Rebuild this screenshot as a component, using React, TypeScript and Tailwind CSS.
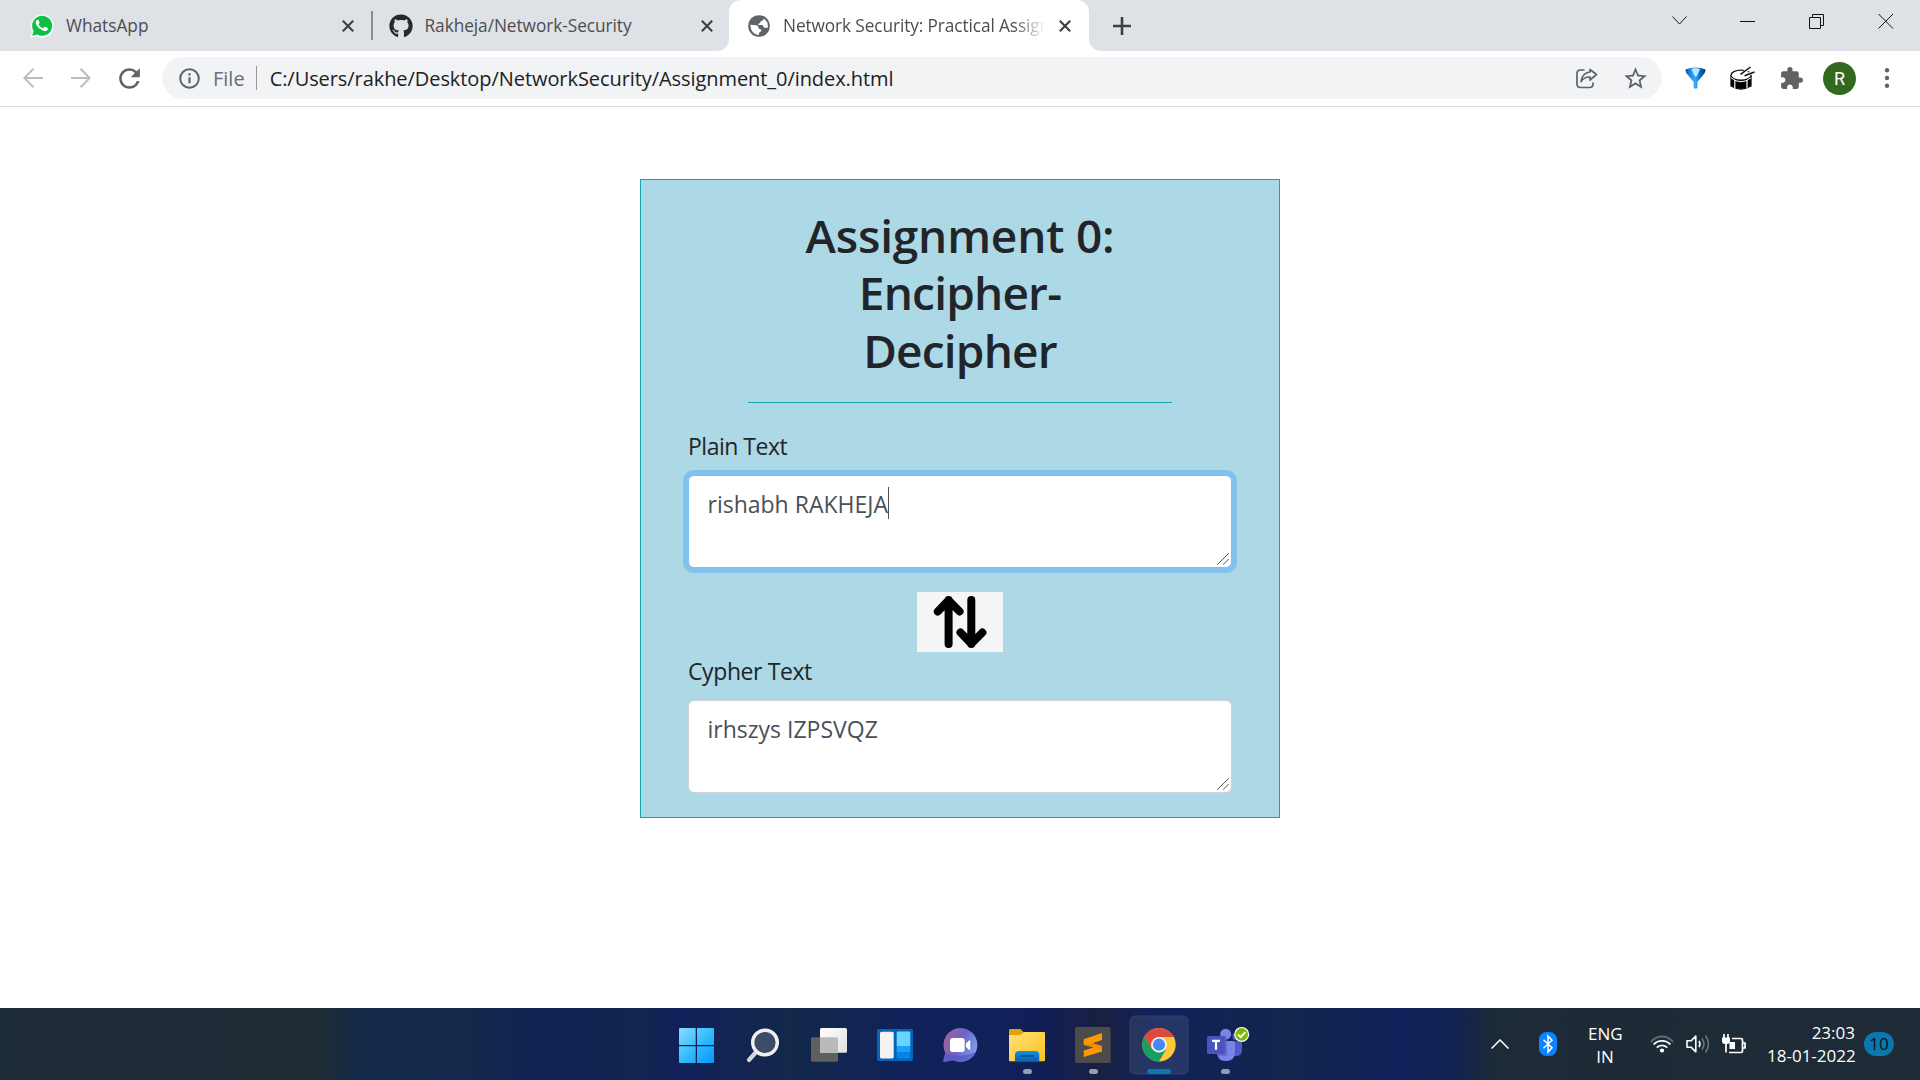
import type { ReactNode } from "react";
import { FaGithub } from "react-icons/fa";
import { MdExtension, MdRefresh, MdStarBorder } from "react-icons/md";

function CloseX() {
  return (
    <svg className="h-3 w-3 shrink-0" viewBox="0 0 12 12" fill="none" stroke="#3c4043" strokeWidth="2.1">
      <path d="M.8.8 11.2 11.2M11.2.8.8 11.2" />
    </svg>
  );
}

function WhatsAppIcon() {
  return (
    <svg className="h-6 w-6 shrink-0" viewBox="0 0 24 24">
      <path d="M.3 24 2 17.7A11.7 11.7 0 1 1 6.4 22.2Z" fill="#f7f9f8" />
      <path d="M2.3 21.8 3.6 17A10 10 0 1 1 7.4 20.6Z" fill="#0cc143" />
      <path
        d="M8.6 6.4c-.3-.6-.5-.6-.9-.6-1.200 0-2 1.300-2 2.700 0 1.600 1.100 3.100 1.300 3.300 1.700 2.500 3.700 4 6.300 4.900 1.900.6 2.500.3 3.200 0 .8-.4 1.400-1.300 1.500-1.900 0-.5 0-.8-.3-.9l-2.400-1.200c-.3-.1-.6-.1-.8.2l-1 1.200c-.2.2-.4.2-.7.1-1.900-.8-3-1.700-4.200-3.700-.2-.3 0-.5.2-.7.4-.5.9-1 .7-1.500Z"
        fill="#fff"
      />
    </svg>
  );
}

function GlobeIcon() {
  return (
    <svg className="h-[22px] w-[22px] shrink-0" viewBox="0 0 22 22">
      <circle cx="11" cy="11" r="10.800" fill="#5f6368" />
      <path
        d="M13.800 2.600Q9.300 3 9.300 5.700q0 1.300-1.300 1.600-1.800.4-1.500 2 .3 1.400 2.200 1.300h3q1.500.1 1.500 1.500v1q.2 1.500 1.700 1.400 1.300 0 1.500-1.300.3-1.200 1.600-1.200h1.800q-.5 5.200-5.200 7.300 0-1.600-1.400-1.900-1.300-.2-1.300-1.500v-1q-.1-1.500-1.500-1.600H7.300Q4 12.800 2.400 10q-.4 7 6.500 9.700-.2-2.200 1-3.100l3.200 1.500 1 .9"
        fill="none"
      />
      <path
        d="M14.600 2.400q1.300 1 .4 2.200-.9 1-2 .9-1 .1-1 1.100T10.900 7.700q-1 .1-1 1.100t1.100 1h2.600q1.300.1 1.400 1.500.1 1.400 1.400 1.400h3.100q-.7 3.400-3.400 5-.7-1-2.100-1-1.300-.1-1.300-1.400 0-1.800-1.600-2-1.700-.1-1.700-1.800 0-1.400-1.400-1.500Q4.800 9.900 2.300 9.300 3.300 4.500 8 2.600 11.500 1.400 14.600 2.400Z"
        fill="#5f6368"
      />
      <path
        d="M15.500 3.500q.3 1.900-1.600 2.300-1.300.1-1.400 1.300-.2 1.200-1.500 1.300-.8.200-.7 1 .1.700 1 .7h2.500q1.600.1 1.700 1.600.1 1.100 1.300 1.100h2.900q1.200-5.900-4.200-9.300Z"
        fill="#fff"
      />
      <path d="M2.200 9.800q3 .2 6 .4 2.300.2 2.200 2.300.1 1.300 1.500 1.400 1.500.2 1.400 1.800-.1 1.100-1.300 1.200-1 .2-1 1.300v1.700Q3 19.800 2.200 9.800Z" fill="#fff" />
    </svg>
  );
}

function TabStrip() {
  return (
    <div className="flex h-[51px] items-center bg-[#dee1e6] text-[17.25px] text-[#4a4e52]">
      <div className="flex h-full w-[371px] items-center pl-[30px]">
        <WhatsAppIcon />
        <span className="ml-3 flex-1 whitespace-nowrap">WhatsApp</span>
        <CloseX />
        <span className="w-[17px]" />
      </div>
      <div className="h-[29px] w-[1.5px] bg-[#8a8d91]" />
      <div className="flex h-full w-[356.5px] items-center pl-[16px]">
        <FaGithub className="h-6 w-6 shrink-0 text-[#24292f]" />
        <span className="ml-[12px] flex-1 whitespace-nowrap tracking-[-0.05px]">Rakheja/Network-Security</span>
        <CloseX />
        <span className="w-[16.5px]" />
      </div>
      <div className="relative flex h-full w-[360px] items-center rounded-t-xl bg-white pl-[19px]">
        <svg className="absolute bottom-0 -left-3 h-3 w-3" viewBox="0 0 12 12">
          <path d="M12 0v12H0A12 12 0 0 0 12 0" fill="#fff" />
        </svg>
        <svg className="absolute -right-3 bottom-0 h-3 w-3" viewBox="0 0 12 12">
          <path d="M0 0v12h12A12 12 0 0 1 0 0" fill="#fff" />
        </svg>
        <GlobeIcon />
        <span className="ml-[13px] w-[262px] overflow-hidden whitespace-nowrap tracking-[-0.1px] [mask-image:linear-gradient(to_right,black_88%,transparent_100%)]">
          Network Security: Practical Assignment
        </span>
        <span className="w-[14px]" />
        <CloseX />
      </div>
      <svg className="ml-6 h-[18px] w-[18px]" viewBox="0 0 18 18" stroke="#3c4043" strokeWidth="2.6">
        <path d="M9 0v18M0 9h18" />
      </svg>
      <svg className="mb-[9px] ml-auto h-4 w-[222px]" viewBox="0 0 222 16" fill="none" stroke="#111" strokeWidth="1">
        <path d="M.5 3.500 7.500 11l7-7.500" />
        <path d="M68 8.500h15" />
        <path d="M137.500 4.500h11v11h-11ZM140.500 4.500v-3h11v11h-3" />
        <path d="m206.500 1 14.500 14.500M221 1l-14.500 14.500" />
      </svg>
      <span className="w-[26px]" />
    </div>
  );
}

function NavArrow({ back }: { back?: boolean }) {
  return (
    <svg className={back ? "h-5 w-5" : "h-5 w-5 rotate-180"} viewBox="0 0 20 20" fill="none" stroke="#babcbe" strokeWidth="2">
      <path d="M20 10H1.500M10.500.800 1.300 10l9.200 9.200" />
    </svg>
  );
}

function Toolbar() {
  return (
    <div className="flex h-14 items-center border-b-[1.5px] border-[#d9dadc] bg-white pb-px">
      <div className="flex w-[162px] items-center pl-[23px]">
        <NavArrow back />
        <span className="w-7" />
        <NavArrow />
        <MdRefresh className="ml-[22.500px] h-[31px] w-[31px] text-[#5f6368]" />
      </div>
      <div className="flex h-[42px] w-[1500px] items-center rounded-full bg-[#f1f3f4] pl-[17px] text-[20px]">
        <svg className="h-[21px] w-[21px]" viewBox="0 0 21 21" fill="none" stroke="#5f6368" strokeWidth="2">
          <circle cx="10.500" cy="10.500" r="9.300" />
          <path d="M10.500 9.300v6M10.500 5.300v2.200" strokeWidth="2.200" />
        </svg>
        <span className="ml-[13px] pt-px text-[#6a6e73]">File</span>
        <span className="ml-[11px] h-6 w-[1.5px] bg-[#96999d]" />
        <span className="ml-[12.5px] pt-px whitespace-nowrap tracking-[-0.07px] text-[#202124]">
          C:/Users/rakhe/Desktop/NetworkSecurity/Assignment_0/index.html
        </span>
        <svg className="ml-auto h-[21px] w-[22px]" viewBox="0 0 22 21" fill="none" stroke="#5f6368" strokeWidth="1.700">
          <path d="M8.500 2H4.500Q1 2 1 5.500v10.500q0 3.500 3.500 3.500h9q3.500 0 3.500-3.500v-1.500" />
          <path d="M14 1.500 20.500 6.500 14 12V9q-5.500-.3-9 4.500 1-8.500 9-9.500Z" strokeLinejoin="round" />
        </svg>
        <MdStarBorder className="ml-[23.500px] h-[27px] w-[27px] text-[#5f6368]" />
        <span className="w-[13.500px]" />
      </div>
      <svg className="ml-[23px] h-[22px] w-[21px]" viewBox="0 0 21 22">
        <defs>
          <linearGradient id="funnel">
            <stop offset="0" stopColor="#0a4a94" />
            <stop offset=".25" stopColor="#1b8df0" />
            <stop offset=".5" stopColor="#38a8fb" />
            <stop offset=".7" stopColor="#0b6fd0" />
            <stop offset="1" stopColor="#06305f" />
          </linearGradient>
        </defs>
        <path d="M.3 2.500Q10.500-1.600 20.700 2.500q-.2 3-3 6L12.300 15v6q-1.800 1.600-3.600 0v-6L3.300 8.500q-2.800-3-3-6Z" fill="url(#funnel)" />
        <path d="M6.500 2q4-1.300 8.500 0L12.500 8Q10.500 11 9 8Z" fill="#d9f1ff" opacity=".85" />
      </svg>
      <svg className="ml-6 h-[24px] w-[25px]" viewBox="0 0 25 24" fill="none" stroke="#111" strokeWidth="1.300">
        <path d="M1 10v10q10 6 20 0V10Z" fill="#000" />
        <path d="M4.800 14v8.500M17 14v8.500" stroke="#fff" strokeWidth="1.200" />
        <ellipse cx="11" cy="9.200" rx="10" ry="5" fill="#fff" />
        <path d="M1 11.800q10 8 20 0" stroke="#fff" strokeWidth="1" />
        <path d="m13 7 7-5M16 9l8-3" stroke="#fff" strokeWidth="3" />
        <path d="m10.500 8.300 10-7.300M14.500 9.800l10-3.800" strokeWidth="1.500" />
      </svg>
      <MdExtension className="ml-[23.500px] h-[25px] w-[25px] text-[#5f6368]" />
      <span className="ml-[19.500px] flex h-[33px] w-[33px] items-center justify-center rounded-full bg-[#33691e] font-['Roboto'] text-[18px] text-white">
        R
      </span>
      <svg className="ml-[28px] h-5 w-[6px]" viewBox="0 0 6 20" fill="#5f6368">
        <circle cx="3" cy="2.200" r="2.200" />
        <circle cx="3" cy="10" r="2.200" />
        <circle cx="3" cy="17.800" r="2.200" />
      </svg>
    </div>
  );
}

function TextBox({ text, focused }: { text: string; focused?: boolean }) {
  return (
    <div
      className={
        focused
          ? "relative flex h-[93px] rounded-[6px] border border-[#80bdff] bg-white pt-[10px] pl-[18.5px] shadow-[0_0_0_5px_#82c0ee]"
          : "relative flex h-[93px] rounded-[6px] border border-[#ced4da] bg-white pt-[10px] pl-[18.5px]"
      }
    >
      <span className="h-9 leading-9 text-[#495057]">{text}</span>
      {focused && <span className="mt-px h-8 w-px bg-[#495057]" />}
      <svg className="absolute right-[2px] bottom-[2px] h-3 w-3" viewBox="0 0 12 12" stroke="#555" strokeWidth="1">
        <path d="M.3 11.700 11.700.300M6 11.700 11.700 6" />
      </svg>
    </div>
  );
}

function CipherCard() {
  return (
    <div className="h-[639px] w-[640px] border border-[#17a2b8] bg-[#add8e6] px-[47px] pt-[26.5px] text-[23px] text-[#212529]">
      <h1 className="text-center text-[46px] leading-[57.6px] font-semibold tracking-[-0.8px]">
        <span className="tracking-[-0.2px]">Assignment 0:</span>
        <br />
        Encipher-
        <br />
        Decipher
      </h1>
      <div className="mx-auto mt-[22.700px] h-px w-[424px] bg-[#17a2b8]" />
      <p className="mt-[25px] h-9 leading-9 tracking-[-0.5px]">Plain Text</p>
      <div className="h-[11px]" />
      <TextBox text="rishabh RAKHEJA" focused />
      <div className="mx-auto mt-6 h-[60px] w-[86px] bg-[#f5f5f5]">
        <svg className="h-full w-full" viewBox="0 0 86 60" fill="none" stroke="#000" strokeWidth="8" strokeLinecap="round" strokeLinejoin="round">
          <path d="M31.600 52V8M20.800 19.500 31.600 8.200 42.600 19.500" />
          <path d="M54.300 8v44M43.500 40.500 54.300 51.800 65.400 40.500" />
          <path d="M27 16.500 31.600 11l4.600 5.500ZM49.700 43.500l4.600 5.500 4.600-5.500Z" fill="#000" strokeWidth="3" />
        </svg>
      </div>
      <p className="mt-px h-9 leading-9 tracking-[-0.4px]">Cypher Text</p>
      <div className="h-[11px]" />
      <TextBox text="irhszys IZPSVQZ" />
    </div>
  );
}

function Slot({ children, active, running }: { children: ReactNode; active?: boolean; running?: boolean }) {
  return (
    <svg className="h-[60px] w-[60px]" viewBox="0 0 60 60">
      {active && <rect x=".75" y=".75" width="58.500" height="58.500" rx="6" fill="#fff" fillOpacity=".09" stroke="#fff" strokeOpacity=".06" strokeWidth="1.500" />}
      {children}
      {active && <rect x="18" y="54" width="24" height="5" rx="2.500" fill="#0b78af" />}
      {running && <rect x="26" y="54" width="9" height="5" rx="2.500" fill="#959db0" />}
    </svg>
  );
}

function Dock() {
  return (
    <div className="ml-0.5 flex gap-[6px]">
      <Slot>
        <defs>
          <linearGradient id="win" x1="12" y1="13" x2="47" y2="48" gradientUnits="userSpaceOnUse">
            <stop offset="0" stopColor="#88dcff" />
            <stop offset=".5" stopColor="#36bdfb" />
            <stop offset="1" stopColor="#0797fb" />
          </linearGradient>
        </defs>
        <path d="M13 13h15.700v17H12V14q0-1 1-1ZM30 13h16q1 0 1 1v16H30ZM12 31.200h16.700V48H13q-1 0-1-1ZM30 31.200h17V47q0 1-1 1H30Z" fill="url(#win)" />
      </Slot>
      <Slot>
        <path d="m24 36-8 9" stroke="#d4d6da" strokeWidth="4.200" strokeLinecap="round" />
        <circle cx="32" cy="27.500" r="12.300" fill="#3d4c66" stroke="#f0f0f1" strokeWidth="3.400" />
      </Slot>
      <Slot>
        <defs>
          <linearGradient id="pane" x1="0" y1="0" x2="1" y2="1">
            <stop offset="0" stopColor="#fff" />
            <stop offset="1" stopColor="#dfdfdf" />
          </linearGradient>
        </defs>
        <rect x="12" y="22.300" width="27" height="24.400" rx="1.500" fill="#5f5f60" />
        <rect x="21" y="13" width="27" height="24.700" rx="1.500" fill="url(#pane)" />
        <path d="M21 22.300h16.500q1.500 0 1.500 1.500v13.900H22.500q-1.500 0-1.500-1.500Z" fill="#b9b9ba" />
      </Slot>
      <Slot>
        <rect x="12" y="14" width="36" height="32" rx="1.500" fill="#0565b5" />
        <rect x="15" y="16.700" width="13.700" height="26.800" rx="1.500" fill="#f3f3f3" />
        <path d="M31.700 17.500q0-1 1-1h11.600q1 0 1 1V31H31.700Z" fill="#66d5ff" />
        <path d="M31.700 31h13.600v6.200H31.700Z" fill="#18a0fa" />
        <path d="M31.700 37.200h13.600v5.300q0 1-1 1H32.700q-1 0-1-1Z" fill="#0684e8" />
      </Slot>
      <Slot>
        <defs>
          <linearGradient id="chat" x1="14" y1="20" x2="46" y2="34" gradientUnits="userSpaceOnUse">
            <stop offset="0" stopColor="#a4629c" />
            <stop offset=".5" stopColor="#6865c6" />
            <stop offset="1" stopColor="#7c9df0" />
          </linearGradient>
        </defs>
        <path d="M29.300 13a17 17 0 1 1-7.300 32.300L13.500 47q-1.500.2-1.200-1.200L14.200 37.500A17 17 0 0 1 29.300 13Z" fill="url(#chat)" />
        <path d="M14.500 38q13 6 30-1A17 17 0 0 1 22 45.300L13.500 47q-1.500.2-1.200-1.200Z" fill="#5552c4" opacity=".65" />
        <rect x="19" y="23" width="14.700" height="14" rx="2.800" fill="#fff" />
        <path d="m35 28.200 3-2.700q1.300-.9 1.300.6v8q0 1.500-1.300.6l-3-2.700Z" fill="#fff" />
      </Slot>
      <Slot running>
        <defs>
          <linearGradient id="folder" x1="0" y1="0" x2="1" y2="1">
            <stop offset="0" stopColor="#ffe07a" />
            <stop offset="1" stopColor="#fbc31c" />
          </linearGradient>
          <linearGradient id="tray" x1="0" y1="0" x2="0" y2="1">
            <stop offset="0" stopColor="#1590df" />
            <stop offset="1" stopColor="#0861b8" />
          </linearGradient>
        </defs>
        <path d="M12 15q0-1 1-1h10.500l3.200 3.200h12V26H12Z" fill="#e2a00b" />
        <path d="M12 20h11.500l3.500-3h20q1 0 1 1v27.300q0 1-1 1H13q-1 0-1-1Z" fill="url(#folder)" />
        <path d="M18 46.300V40q0-4 4-4h16.300q4 0 4 4v6.300Z" fill="url(#tray)" />
        <path d="M22.500 41h14.500" stroke="#074e8c" strokeWidth="1.600" />
      </Slot>
      <Slot running>
        <rect x="12" y="12" width="35.700" height="36" rx="2" fill="#4b4b4b" />
        <path d="M39 18v7l-9.500 3.200L39 31v5.500L20.700 42v-6.500l10-3-10-2.800V24.300Z" fill="#ff9800" />
        <path d="m20.700 29.700 9-1.500L39 31v3l-8.300-1.500Z" fill="#f08a00" />
      </Slot>
      <Slot active>
        <circle cx="30" cy="29.700" r="16.700" fill="#fdc939" />
        <path d="M15.540 21.350A16.700 16.700 0 0 0 30 46.400L37.200 33.900 30 37.500 23 33.800Z" fill="#16a05d" />
        <path d="M15.540 21.350A16.700 16.700 0 0 1 44.900 22H30L22 27v6Z" fill="#db4a3f" />
        <circle cx="30" cy="29.700" r="7.700" fill="#f3f4f6" />
        <circle cx="30" cy="29.700" r="6.100" fill="#4688f4" />
      </Slot>
      <Slot running>
        <circle cx="41.500" cy="21.500" r="4" fill="#5059c9" />
        <path d="M37 26.500h8.500q1.500 0 1.500 1.500v7q0 6-6 6h-4Z" fill="#5059c9" />
        <circle cx="30.700" cy="19.200" r="5.500" fill="#7b83eb" />
        <path d="M22 26h16.500q1.500 0 1.500 1.500V37q0 9-9 9t-9-9Z" fill="#7b83eb" />
        <path d="M24 21h6.500q1.500 0 1.500 1.500v17q0 1.500-1.500 1.500H23Z" fill="#5860c8" opacity=".7" />
        <rect x="12" y="21" width="18" height="18" rx="1.500" fill="#4b53bc" />
        <path d="M17 25.800h8M21 25.800v9" stroke="#fff" strokeWidth="2.200" />
        <circle cx="46.700" cy="19.400" r="7.500" fill="#fff" />
        <circle cx="46.700" cy="19.400" r="6.300" fill="#7fba00" />
        <path d="m43 19.500 2.700 2.700 4.700-5" fill="none" stroke="#fff" strokeWidth="1.900" />
      </Slot>
    </div>
  );
}

function Tray() {
  return (
    <div className="mb-0.5 flex flex-1 items-center justify-end text-[17px] leading-[23.500px] text-white">
      <svg className="h-[10px] w-[18px]" viewBox="0 0 18 10" fill="none" stroke="#fff" strokeWidth="1.500">
        <path d="M.5 9.500 9 1l8.500 8.500" />
      </svg>
      <svg className="ml-[30px] h-6 w-[18px]" viewBox="0 0 18 24" fill="none" stroke="#fff" strokeWidth="1.500">
        <rect width="18" height="24" rx="7.500" fill="#0a84ff" stroke="none" />
        <path d="m4.500 7.800 8.500 8L9 20V4l4 4.200-8.500 8" />
      </svg>
      <div className="ml-[31px] w-[34px] pt-0.5 text-center whitespace-nowrap">
        <p>ENG</p>
        <p>IN</p>
      </div>
      <svg className="ml-[28px] h-5 w-6" viewBox="0 0 24 20" fill="none" stroke="#fff" strokeWidth="1.800">
        <path d="M.8 8Q5.500 2.500 12 2.500T23.200 8" opacity=".3" />
        <path d="M3.500 10.500Q7 6.800 12 6.800t8.500 3.700M6.800 13.600q2-2.300 5.200-2.300t5.200 2.300" />
        <circle cx="12" cy="16.500" r="2.100" fill="#fff" stroke="none" />
      </svg>
      <svg className="ml-3 h-5 w-6" viewBox="0 0 24 20" fill="none" stroke="#fff" strokeWidth="1.600">
        <path d="M1 6.800h4L9.800 2.200v15.600L5 13.200H1Z" strokeLinejoin="round" />
        <path d="M13 7q2 3 0 6" />
        <path d="M16 4.500q4 5.500 0 11M19.500 1.500q6 8.500 0 17" opacity=".35" />
      </svg>
      <svg className="ml-3 h-5 w-6" viewBox="0 0 24 20" fill="none" stroke="#fff" strokeWidth="1.700">
        <path d="M10 4.500h9q1.500 0 1.500 1.500v11q0 1.500-1.500 1.500H7M21 9h2v5h-2" />
        <path d="M7.500 8h5.500v7H7.500Z" fill="#fff" stroke="none" />
        <path d="M0 3.500h8v3.500q0 3-3 3H3q-3 0-3-3Z" fill="#fff" stroke="none" />
        <path d="M2 0v4M6 0v4M4 9v9.500" />
      </svg>
      <div className="ml-[21px] w-[88px] text-right whitespace-nowrap">
        <p>23:03</p>
        <p>18-01-2022</p>
      </div>
      <span className="ml-[9px] flex h-6 w-[30px] items-center justify-center rounded-full bg-[#0b77ad] text-[17px] text-[#06131d]">10</span>
      <span className="w-[26px]" />
    </div>
  );
}

export default function App() {
  return (
    <div className="flex h-[1080px] w-[1920px] flex-col overflow-hidden bg-white font-['Open_Sans',sans-serif]">
      <TabStrip />
      <Toolbar />
      <main className="flex flex-1 justify-center pt-[72px]">
        <CipherCard />
      </main>
      <footer className="flex h-[72px] items-center bg-[linear-gradient(90deg,#1e2c38_0px,#1f2b35_320px,#132a4a_362px,#13284a_470px,#102253_540px,#11254e_640px,#10215a_680px,#13284a_790px,#10225a_910px,#111f58_1040px,#19203f_1100px,#10225a_1150px,#12254c_1290px,#10215a_1400px,#11234f_1460px,#1d2a37_1495px,#1f2b36_1920px)] pt-0.5">
        <span className="flex-1" />
        <Dock />
        <Tray />
      </footer>
    </div>
  );
}
